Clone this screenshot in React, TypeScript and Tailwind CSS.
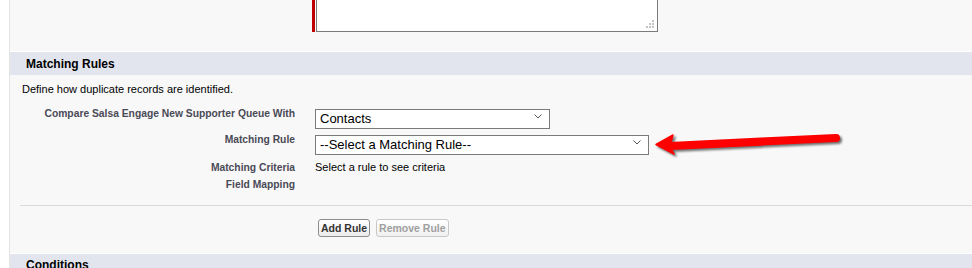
import { useState } from "react"

const font = { fontFamily: '"Liberation Sans", Arial, sans-serif' }

function Chevron() {
  return (
    <svg className="pointer-events-none absolute right-[8px] top-[8px]" width="8" height="5" viewBox="0 0 8 5">
      <path d="M0.5 0.5 L4 4 L7.5 0.5" fill="none" stroke="#555" strokeWidth="1" />
    </svg>
  )
}

function Select({ width, value, options }: { width: string; value: string; options: string[] }) {
  const [v, setV] = useState(value)
  return (
    <div className={`relative h-[20px] ${width}`}>
      <select
        value={v}
        onChange={(e) => setV(e.target.value)}
        className="h-full w-full appearance-none border border-[#7a7a7a] bg-white pl-[4px] text-[13px] leading-[18px] text-black outline-none"
      >
        {options.map((o) => (
          <option key={o}>{o}</option>
        ))}
      </select>
      <Chevron />
    </div>
  )
}

const Label = ({ children }: { children: string }) => (
  <div className="pt-[1px] text-right text-[10.3px] font-bold leading-[13px] text-[#4a4a56]">{children}</div>
)

export default function App() {
  return (
    <div className="relative h-[268px] w-[972px] overflow-hidden bg-white" style={font}>
      <div className="ml-[9px] h-full border-l border-[#e4e4e4] bg-[#f8f8f8]">
        {/* textarea from section above */}
        <div className="flex h-[51px] pl-[302px]">
          <div className="h-[32px] w-[3px] bg-[#c00000]" />
          <div className="relative ml-[1px] h-[32px] w-[342px] border-x border-b border-[#7a7a7a] bg-white">
            <svg className="absolute bottom-[3px] right-[3px]" width="8" height="8" viewBox="0 0 8 8">
              <rect x="6" y="0" width="2" height="2" fill="#c4c4c4" />
              <rect x="3" y="3" width="2" height="2" fill="#c4c4c4" />
              <rect x="6" y="3" width="2" height="2" fill="#c4c4c4" />
              <rect x="0" y="6" width="2" height="2" fill="#c4c4c4" />
              <rect x="3" y="6" width="2" height="2" fill="#c4c4c4" />
              <rect x="6" y="6" width="2" height="2" fill="#c4c4c4" />
            </svg>
          </div>
        </div>

        {/* Matching Rules */}
        <div className="flex h-[24px] items-center border-t border-white bg-[#e3e5ee] pl-[16px]">
          <h3 className="text-[12px] font-bold text-black">Matching Rules</h3>
        </div>
        <p className="pl-[12px] pt-[7px] text-[11px] leading-[14px] text-black">Define how duplicate records are identified.</p>

        <div className="mt-[10px] grid grid-cols-[285px_1fr] gap-x-[20px]">
          <Label>Compare Salsa Engage New Supporter Queue With</Label>
          <Select width="w-[235px]" value="Contacts" options={["Contacts", "Leads"]} />
          <div className="mt-[6px]">
            <Label>Matching Rule</Label>
          </div>
          <div className="mt-[6px]">
            <Select width="w-[334px]" value="--Select a Matching Rule--" options={["--Select a Matching Rule--"]} />
          </div>
          <div className="mt-[8px]">
            <Label>Matching Criteria</Label>
          </div>
          <div className="mt-[8px] text-[11px] leading-[14px] text-black">Select a rule to see criteria</div>
          <div className="mt-[3px]">
            <Label>Field Mapping</Label>
          </div>
          <div />
        </div>

        <div className="ml-[10px] mt-[14px] border-t border-[#dbdbdb]" />

        <div className="flex gap-[6px] pl-[308px] pt-[13px]">
          <button className="h-[18px] rounded-[3px] border border-[#8d8d8d] bg-gradient-to-b from-white to-[#ececec] px-[2px] text-[10.5px] font-bold leading-[16px] text-[#333]">
            Add Rule
          </button>
          <button disabled className="h-[18px] rounded-[3px] border border-[#c8c8c8] bg-gradient-to-b from-white to-[#f0f0f0] px-[2px] text-[10.5px] font-bold leading-[16px] text-[#a0a0a0]">
            Remove Rule
          </button>
        </div>

        <div className="mt-[16px] flex h-[24px] items-start border-t border-white bg-[#e3e5ee] pl-[16px] pt-[4px]">
          <h3 className="text-[12px] font-bold leading-[14px] text-black">Conditions</h3>
        </div>
      </div>

      {/* red annotation arrow */}
      <svg
        className="absolute left-[650px] top-[128px] drop-shadow-[2px_2px_1px_rgba(0,0,0,0.55)]"
        width="200"
        height="34"
        viewBox="0 0 200 34"
      >
        <line x1="20" y1="18" x2="186" y2="10" stroke="#ff0000" strokeWidth="8" strokeLinecap="round" />
        <path d="M6 16.5 L23 7 L20 18 L24 26 Z" fill="#ff0000" stroke="#ff0000" strokeWidth="1.5" strokeLinejoin="round" />
      </svg>
    </div>
  )
}
